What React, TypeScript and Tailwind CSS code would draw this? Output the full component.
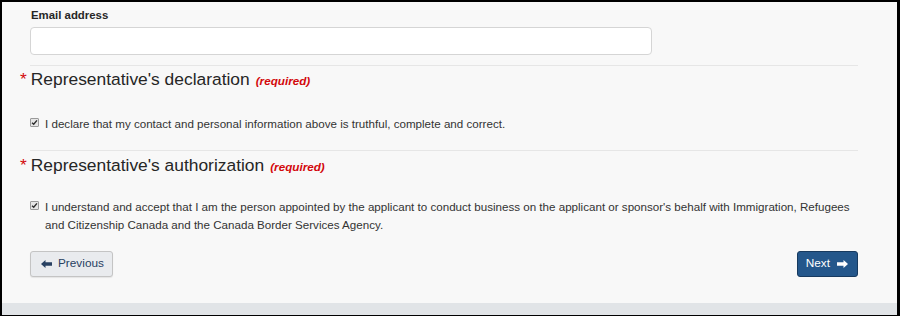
import React from "react";

function CheckMark() {
  return (
    <span className="mt-[3px] flex h-[9px] w-[9px] shrink-0 items-center justify-center rounded-[1px] border border-[#9a9a9a] bg-[#e6e6e6]">
      <svg viewBox="0 0 8 8" className="h-[7px] w-[7px]">
        <path d="M1.2 4.2 L3.1 6 L6.8 1.6" fill="none" stroke="#2b2b2b" strokeWidth="1.6" />
      </svg>
    </span>
  );
}

function ArrowIcon({ dir, color }: { dir: "left" | "right"; color: string }) {
  // Glyphicon-like filled arrow
  return (
    <svg viewBox="0 0 11 8" className={"h-[8px] w-[11px]" + (dir === "left" ? "" : " -scale-x-100")}>
      <path d="M0 4 L4.5 0 L4.5 2.3 L11 2.3 L11 5.7 L4.5 5.7 L4.5 8 Z" fill={color} />
    </svg>
  );
}

function SectionTitle({ title }: { title: string }) {
  return (
    <div className="flex items-baseline">
      <span className="ml-[-10px] mr-[4px] text-[17.4px] leading-[24px] text-[#d3080c]">*</span>
      <h2 className="text-[17.4px] leading-[24px] text-[#262626]">{title}</h2>
      <span className="ml-[6px] text-[11.7px] font-bold italic text-[#d3080c]">(required)</span>
    </div>
  );
}

/**
 * Representative declaration form footer.
 */
export default function App() {
  return (
    <div className="flex h-[316px] w-[900px] flex-col border-b border-l-2 border-r-[3px] border-t-2 border-black bg-[#f8f8f8] font-['Liberation_Sans',Arial,sans-serif] text-[#333]">
      <div className="flex-1 pl-[28px] pr-[39px]">
        {/* Email */}
        <label className="mt-[5px] block pl-[1px] text-[11.4px] font-bold leading-[16px] text-[#262626]">Email address</label>
        <div className="mt-[4px] h-[28px] w-[622px] rounded-[4px] border border-[#d5d5d5] bg-white" />
        <hr className="mt-[10px] border-t border-[#e6e6e6]" />

        {/* Declaration */}
        <div className="mt-[1px]">
          <SectionTitle title="Representative's declaration" />
        </div>
        <div className="mt-[24px] flex gap-[6px] text-[11.6px] leading-[18px]">
          <CheckMark />
          <p>I declare that my contact and personal information above is truthful, complete and correct.</p>
        </div>
        <hr className="mt-[17px] border-t border-[#e6e6e6]" />

        {/* Authorization */}
        <div className="mt-[2px]">
          <SectionTitle title="Representative's authorization" />
        </div>
        <div className="mt-[21px] flex gap-[6px] text-[11.6px] leading-[18px]">
          <CheckMark />
          <p>
            I understand and accept that I am the person appointed by the applicant to conduct business on the applicant or sponsor's behalf with Immigration, Refugees and Citizenship Canada and the Canada Border Services Agency.
          </p>
        </div>

        {/* Navigation */}
        <div className="mt-[17px] flex items-center justify-between">
          <button className="flex h-[26px] items-center gap-[6px] rounded-[3px] border border-[#c4c4c4] bg-[#e9ebee] pl-[10px] pr-[8px] text-[11.8px] text-[#284162] shadow-[0_1px_1px_rgba(0,0,0,0.08)]">
            <ArrowIcon dir="left" color="#284162" />
            Previous
          </button>
          <button className="flex h-[26px] items-center gap-[7px] rounded-[3px] border border-[#173a5f] bg-[#24578b] pl-[8px] pr-[9px] text-[11.8px] text-white">
            Next
            <ArrowIcon dir="right" color="#ffffff" />
          </button>
        </div>
      </div>
      <div className="h-[12px] bg-[#e1e4e7]" />
    </div>
  );
}
